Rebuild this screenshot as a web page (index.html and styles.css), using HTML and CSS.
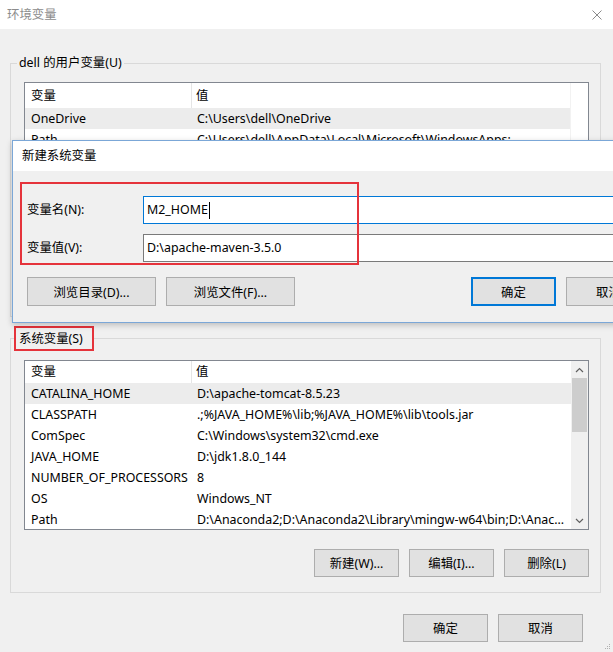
FILE: index.html
```html
<!DOCTYPE html>
<html lang="zh-CN">
<head>
<meta charset="utf-8">
<title>环境变量</title>
<link rel="stylesheet" href="styles.css">
</head>
<body>
<div class="window">
  <div class="titlebar">
    <span class="title">环境变量</span>
    <svg class="close" width="10" height="10" viewBox="0 0 10 10"><path d="M0.5 0.5 L9.5 9.5 M9.5 0.5 L0.5 9.5" stroke="#8a8a8a" stroke-width="1" fill="none"/></svg>
  </div>
  <div class="body">
    <fieldset class="group user-group">
      <legend class="group-label">dell 的用户变量(U)</legend>
      <div class="list">
        <div class="list-main">
          <div class="list-head tall"><span class="c1 head-c1">变量</span><span class="c2">值</span></div>
          <div class="row selected"><span class="c1">OneDrive</span><span class="c2">C:\Users\dell\OneDrive</span></div>
          <div class="row"><span class="c1">Path</span><span class="c2">C:\Users\dell\AppData\Local\Microsoft\WindowsApps;</span></div>
          <div class="row"><span class="c1">TEMP</span><span class="c2">C:\Users\dell\AppData\Local\Temp</span></div>
          <div class="row"><span class="c1">TMP</span><span class="c2">C:\Users\dell\AppData\Local\Temp</span></div>
        </div>
        <div class="list-gutter"></div>
      </div>
      <div class="btn-row">
        <button class="btn">新建(N)...</button>
        <button class="btn">编辑(E)...</button>
        <button class="btn">删除(D)</button>
      </div>
    </fieldset>

    <fieldset class="group sys-group">
      <legend class="group-label marked">系统变量(S)</legend>
      <div class="list">
        <div class="list-main">
          <div class="list-head"><span class="c1 head-c1">变量</span><span class="c2">值</span></div>
          <div class="row selected"><span class="c1">CATALINA_HOME</span><span class="c2">D:\apache-tomcat-8.5.23</span></div>
          <div class="row"><span class="c1">CLASSPATH</span><span class="c2">.;%JAVA_HOME%\lib;%JAVA_HOME%\lib\tools.jar</span></div>
          <div class="row"><span class="c1">ComSpec</span><span class="c2">C:\Windows\system32\cmd.exe</span></div>
          <div class="row"><span class="c1">JAVA_HOME</span><span class="c2">D:\jdk1.8.0_144</span></div>
          <div class="row"><span class="c1">NUMBER_OF_PROCESSORS</span><span class="c2">8</span></div>
          <div class="row"><span class="c1">OS</span><span class="c2">Windows_NT</span></div>
          <div class="row"><span class="c1">Path</span><span class="c2">D:\Anaconda2;D:\Anaconda2\Library\mingw-w64\bin;D:\Anac...</span></div>
        </div>
        <div class="scrollbar">
          <div class="sb-arrow"><svg width="9" height="6" viewBox="0 0 9 6"><path d="M1 5 L4.5 1.5 L8 5" stroke="#606060" stroke-width="1.2" fill="none"/></svg></div>
          <div class="sb-track"><div class="sb-thumb"></div></div>
          <div class="sb-arrow"><svg width="9" height="6" viewBox="0 0 9 6"><path d="M1 1 L4.5 4.5 L8 1" stroke="#606060" stroke-width="1.2" fill="none"/></svg></div>
        </div>
      </div>
      <div class="btn-row">
        <button class="btn">新建(W)...</button>
        <button class="btn">编辑(I)...</button>
        <button class="btn">删除(L)</button>
      </div>
    </fieldset>

    <div class="footer">
      <button class="btn">确定</button>
      <button class="btn">取消</button>
    </div>
  </div>

  <div class="dialog">
    <div class="dialog-title">新建系统变量</div>
    <div class="dialog-body">
      <div class="form">
        <label class="form-label">变量名(N):</label>
        <div class="input focused"><span>M2_HOME</span><span class="caret"></span></div>
        <label class="form-label">变量值(V):</label>
        <div class="input"><span>D:\apache-maven-3.5.0</span></div>
      </div>
      <div class="dialog-buttons">
        <div class="btn-group">
          <button class="btn wide">浏览目录(D)...</button>
          <button class="btn wide">浏览文件(F)...</button>
        </div>
        <div class="btn-group">
          <button class="btn default">确定</button>
          <button class="btn">取消</button>
        </div>
      </div>
    </div>
    <div class="annotation"></div>
  </div>

  <svg class="grip" width="6" height="6" viewBox="0 0 6 6"><rect x="4" y="0" width="1" height="1" fill="#b0b0b0"/><rect x="2" y="2" width="1" height="1" fill="#b0b0b0"/><rect x="4" y="2" width="1" height="1" fill="#b0b0b0"/><rect x="0" y="4" width="1" height="1" fill="#b0b0b0"/><rect x="2" y="4" width="1" height="1" fill="#b0b0b0"/><rect x="4" y="4" width="1" height="1" fill="#b0b0b0"/></svg>
</div>
</body>
</html>
```

FILE: styles.css
```css
* { box-sizing: border-box; }

html, body {
  margin: 0;
  padding: 0;
}

body {
  width: 613px;
  height: 652px;
  overflow: hidden;
  background: #f0f0f0;
  font-family: "Noto Sans", "Noto Sans CJK SC", sans-serif;
  font-size: 12.4px;
  line-height: 16px;
  color: #000;
}

.window {
  position: relative;
  width: 613px;
  height: 652px;
  background: #f0f0f0;
}

.titlebar {
  height: 29px;
  background: #fff;
  display: flex;
  align-items: center;
  justify-content: space-between;
  padding: 0 11px 0 7px;
}

.title {
  color: #8c8c8c;
}

.body {
  padding: 0 12px 0 10px;
}

.group {
  margin: 0;
  border: 1px solid #d9d9d9;
  padding: 0 11px 0 13px;
  min-width: 0;
}

.group-label {
  padding: 0 2px;
  margin-left: -7px;
  line-height: 16px;
}

.user-group {
  margin-top: 26px;
  padding-top: 11px;
  padding-bottom: 16px;
}

.sys-group {
  margin-top: 9px;
  padding-top: 9px;
  padding-bottom: 15px;
}

.group-label.marked {
  border: 2px solid #e5333b;
  padding: 0 3px 0 3px;
  margin-left: -10px;
  width: 80px;
  line-height: 21px;
}

.list {
  display: flex;
  height: 170px;
  border: 1px solid #828790;
  background: #fff;
}

.list-main {
  flex: 1;
  min-width: 0;
  overflow: hidden;
}

.list-head {
  display: flex;
  height: 22px;
  align-items: stretch;
}

.list-head.tall {
  height: 25px;
}

.list-head span {
  display: flex;
  align-items: center;
}

.row {
  display: flex;
  height: 21px;
  align-items: center;
}

.row.selected {
  background: #ececec;
}

.c1 {
  flex: 0 0 168px;
  padding-left: 6px;
  white-space: nowrap;
  overflow: hidden;
}

.head-c1 {
  border-right: 1px solid #e5e5e5;
  flex-basis: 167px;
}

.c2 {
  flex: 1;
  min-width: 0;
  padding-left: 4px;
  white-space: nowrap;
  overflow: hidden;
}

.list-gutter {
  width: 18px;
  border-left: 1px solid #f2f2f2;
  background: #fff;
}

.scrollbar {
  width: 17px;
  display: flex;
  flex-direction: column;
  background: #f0f0f0;
}

.sb-arrow {
  height: 17px;
  display: flex;
  align-items: center;
  justify-content: center;
}

.sb-track {
  flex: 1;
  padding: 0 1px;
}

.sb-thumb {
  height: 54px;
  background: #cdcdcd;
}

.btn-row {
  display: flex;
  justify-content: flex-end;
  gap: 10px;
  margin-top: 19px;
}

.user-group .btn-row {
  margin-top: 20px;
}

.btn {
  width: 85px;
  height: 28px;
  background: #e1e1e1;
  border: 1px solid #adadad;
  font-family: inherit;
  font-size: 12.4px;
  color: #000;
  padding: 0;
  margin: 0;
}

.footer {
  display: flex;
  justify-content: flex-end;
  gap: 10px;
  margin-top: 21px;
  padding-right: 18px;
}

/* overlay dialog */
.dialog {
  position: absolute;
  left: 12px;
  top: 140px;
  width: 654px;
  height: 183px;
  border: 1px solid #7ba7d7;
  background: #f0f0f0;
  box-shadow: 0 2px 6px rgba(0, 0, 0, 0.22);
}

.dialog-title {
  height: 30px;
  background: #fff;
  display: flex;
  align-items: center;
  padding-left: 9px;
}

.dialog-body {
  padding: 25px 14px 16px 14px;
}

.form {
  display: grid;
  grid-template-columns: 116px 1fr;
  row-gap: 10px;
  align-items: center;
}

.form-label {
  display: block;
}

.input {
  height: 28px;
  border: 1px solid #7a7a7a;
  background: #fff;
  display: flex;
  align-items: center;
  padding-left: 3px;
}

.input.focused {
  border-color: #0078d7;
}

.caret {
  display: inline-block;
  width: 1px;
  height: 17px;
  background: #000;
  margin-left: 1px;
}

.dialog-buttons {
  display: flex;
  justify-content: space-between;
  margin-top: 15px;
}

.btn-group {
  display: flex;
  gap: 10px;
}

.dialog-buttons .btn {
  height: 29px;
}

.btn.wide {
  width: 129px;
}

.btn.default {
  border: 2px solid #0078d7;
}

.annotation {
  position: absolute;
  left: 7px;
  top: 41px;
  width: 339px;
  height: 83px;
  border: 2px solid #e5333b;
  pointer-events: none;
}

.grip {
  position: absolute;
  right: 2px;
  bottom: 2px;
}
```
